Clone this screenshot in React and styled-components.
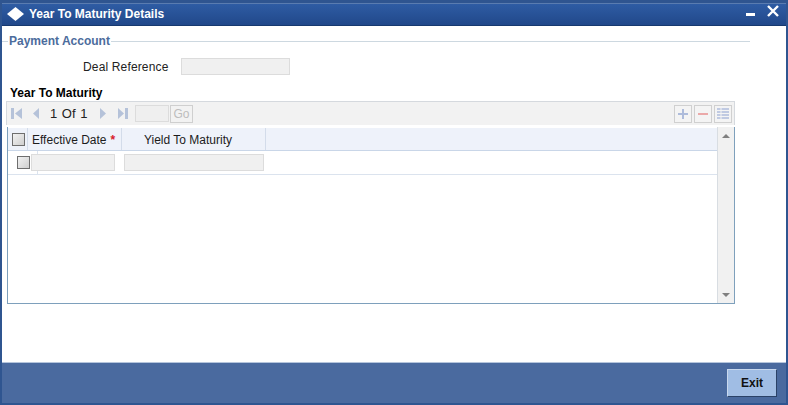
import React from 'react';
import styled, { createGlobalStyle } from 'styled-components';

const GlobalStyle = createGlobalStyle`
  html, body {
    margin: 0;
    padding: 0;
    background: #fff;
    font-family: "Liberation Sans", Arial, sans-serif;
  }
`;

const Window = styled.div`
  width: 788px;
  height: 405px;
  box-sizing: border-box;
  display: flex;
  flex-direction: column;
  border-left: 2px solid #2f5590;
  border-right: 2px solid #2f5590;
  border-bottom: 2px solid #2f5590;
  overflow: hidden;
`;

const TitleBar = styled.div`
  height: 26px;
  flex: none;
  box-sizing: border-box;
  display: flex;
  align-items: center;
  padding: 0 7px 0 5px;
  border-top: 3px solid #2f5590;
  border-bottom: 1px solid #17396f;
  box-shadow: inset 0 1px 0 #5a7cb0;
  background: linear-gradient(#2f5da5, #21488a);
`;

const Title = styled.span`
  margin-left: 5px;
  color: #fff;
  font-size: 12px;
  font-weight: 700;
  flex: 1;
`;

const Body = styled.div`
  flex: 1;
  display: flex;
  flex-direction: column;
  background: #fff;
`;

const Legend = styled.div`
  display: flex;
  align-items: center;
  width: 748px;
  margin-top: 8px;
  height: 14px;
  color: #4c6c9c;
  font-size: 12px;
  font-weight: 700;

  &::before {
    content: '';
    width: 6px;
    height: 1px;
    margin-right: 1px;
    background: #cdd8e0;
  }

  &::after {
    content: '';
    flex: 1;
    height: 1px;
    margin-left: 1px;
    background: #cdd8e0;
  }
`;

const FieldRow = styled.div`
  display: flex;
  align-items: center;
  margin-top: 10px;
  padding-left: 81px;
`;

const FieldLabel = styled.label`
  width: 98px;
  color: #222;
  font-size: 12px;
  letter-spacing: 0.15px;
`;

const TextBox = styled.div`
  box-sizing: border-box;
  width: ${p => p.$w}px;
  height: 17px;
  flex: none;
  margin-left: ${p => p.$gap || 0}px;
  background: #f0f0f0;
  border: 1px solid #dcdcdc;
`;

const SectionTitle = styled.div`
  margin: 11px 0 0 8px;
  height: 15px;
  color: #000;
  font-size: 12px;
  font-weight: 700;
`;

const Toolbar = styled.div`
  box-sizing: border-box;
  width: 729px;
  height: 24px;
  margin-left: 4px;
  padding: 0 0 0 4px;
  display: flex;
  align-items: center;
  background: #f2f2f2;
  border: 1px solid #d5d9de;
  border-bottom: none;
`;

const Pager = styled.div`
  display: flex;
  align-items: center;
  flex: 1;
`;

const PagerIcon = styled.svg`
  width: 13px;
  height: 13px;
  flex: none;
  margin-right: ${p => p.$gap || 0}px;
  fill: #b5c2d9;
`;

const PageText = styled.span`
  width: 47px;
  margin-left: 4px;
  color: #222;
  font-size: 13px;
  word-spacing: 1px;
`;

const GoBox = styled.div`
  box-sizing: border-box;
  width: 34px;
  height: 17px;
  background: #efefef;
  border: 1px solid #dcdcdc;
`;

const GoButton = styled.div`
  box-sizing: border-box;
  width: 23px;
  height: 18px;
  margin-left: 1px;
  border: 1px solid #cfcfcf;
  color: #bdbdbd;
  font-size: 12px;
  line-height: 16px;
  text-align: center;
`;

const ToolButtons = styled.div`
  display: flex;
  gap: 2px;
  padding-right: 2px;
`;

const ToolButton = styled.div`
  box-sizing: border-box;
  width: 18px;
  height: 18px;
  display: flex;
  align-items: center;
  justify-content: center;
  border: 1px solid #d0d0d0;
  background: #f4f4f4;
`;

const Grid = styled.div`
  box-sizing: border-box;
  width: 728px;
  height: 177px;
  margin: 2px 0 0 5px;
  display: flex;
  border: 1px solid #7ea0bc;
  border-top: none;
  background: #fff;
`;

const GridMain = styled.div`
  flex: 1;
  padding-top: 1px;
  border-right: 1px solid #d8dde2;
`;

const HeaderRow = styled.div`
  height: 23px;
  box-sizing: border-box;
  display: flex;
  align-items: center;
  background: #eef2fa;
  border-bottom: 1px solid #c9d6e8;
`;

const HeaderCell = styled.div`
  box-sizing: border-box;
  width: ${p => p.$w}px;
  height: 100%;
  display: flex;
  align-items: center;
  padding: 1px ${p => p.$padRight || 0}px 0 ${p => p.$pad || 0}px;
  justify-content: ${p => (p.$center ? 'center' : 'flex-start')};
  border-right: 1px solid #d3dcea;
  color: #1c1c1c;
  font-size: 12px;
`;

const Required = styled.span`
  margin-left: 4px;
  color: #d8202a;
  font-weight: 700;
`;

const Check = styled.div`
  box-sizing: border-box;
  width: 13px;
  height: 13px;
  flex: none;
  background: linear-gradient(135deg, #f2f2f2, #cfcfcf);
  border: 1px solid #6e6e6e;
`;

const DataRow = styled.div`
  height: 24px;
  box-sizing: border-box;
  display: flex;
  align-items: center;
  border-bottom: 1px solid #dbe3ee;
  background: linear-gradient(#dbe3ee, #dbe3ee) 29px 0 / 1px 100% no-repeat;
`;

const RowCheck = styled.div`
  width: 22px;
  margin-right: 1px;
  display: flex;
  justify-content: flex-end;
  flex: none;
`;

const Scrollbar = styled.div`
  width: 16px;
  flex: none;
  display: flex;
  flex-direction: column;
  justify-content: space-between;
  align-items: center;
  padding: 7px 0 6px;
  background: #f1f1f1;
`;

const Arrow = styled.div`
  width: 0;
  height: 0;
  border-left: 4px solid transparent;
  border-right: 4px solid transparent;
  border-${p => (p.$down ? 'top' : 'bottom')}: 4px solid #808080;
`;

const Spacer = styled.div`
  flex: 1;
`;

const Footer = styled.div`
  height: 41px;
  flex: none;
  box-sizing: border-box;
  display: flex;
  align-items: center;
  justify-content: flex-end;
  padding: 0 9px 0 0;
  background: #4a6a9f;
  border-top: 1px solid #b5c5dc;
`;

const ExitButton = styled.div`
  box-sizing: border-box;
  width: 50px;
  height: 28px;
  display: flex;
  align-items: center;
  justify-content: center;
  background: #a0bde4;
  border-top: 1px solid #c8d8ee;
  border-left: 1px solid #c8d8ee;
  border-right: 1px solid #2a4268;
  border-bottom: 1px solid #2a4268;
  color: #111;
  font-size: 12px;
  font-weight: 700;
`;

const WindowIcons = styled.div`
  display: flex;
  align-items: center;
  gap: 12px;
`;

const CloseIcon = styled.svg`
  margin-bottom: 7px;
`;

const App = () => {
  return (
    <Window>
      <GlobalStyle />
      <TitleBar>
        <svg width="17" height="14" viewBox="0 0 17 14">
          <polygon points="8.5,0 17,7 8.5,14 0,7" fill="#fff" />
        </svg>
        <Title>Year To Maturity Details</Title>
        <WindowIcons>
          <svg width="9" height="3" viewBox="0 0 9 3"><rect width="9" height="3" fill="#fff" /></svg>
          <CloseIcon width="12" height="12" viewBox="0 0 12 12">
            <path d="M1 1L11 11M11 1L1 11" stroke="#fff" strokeWidth="2.4" />
          </CloseIcon>
        </WindowIcons>
      </TitleBar>
      <Body>
        <Legend>Payment Account</Legend>
        <FieldRow>
          <FieldLabel>Deal Reference</FieldLabel>
          <TextBox $w={109} />
        </FieldRow>
        <SectionTitle>Year To Maturity</SectionTitle>
        <Toolbar>
          <Pager>
            <PagerIcon viewBox="0 0 13 13" $gap={6}><path d="M0 1h3v11H0zM11 1v11L4 6.5z" /></PagerIcon>
            <PagerIcon viewBox="0 0 13 13" $gap={3}><path d="M9 1v11L3 6.5z" /></PagerIcon>
            <PageText>1 Of 1</PageText>
            <PagerIcon viewBox="0 0 13 13" $gap={6}><path d="M3 1v11l6-5.500z" /></PagerIcon>
            <PagerIcon viewBox="0 0 13 13" $gap={6}><path d="M2 1v11l6-5.500zM9 1h3v11H9z" /></PagerIcon>
            <GoBox />
            <GoButton>Go</GoButton>
          </Pager>
          <ToolButtons>
            <ToolButton>
              <svg width="12" height="12" viewBox="0 0 12 12"><path d="M5 1h2v4h4v2H7v4H5V7H1V5h4z" fill="#aebcdb" /></svg>
            </ToolButton>
            <ToolButton>
              <svg width="12" height="12" viewBox="0 0 12 12"><rect x="1" y="5" width="10" height="2" fill="#eba9a9" /></svg>
            </ToolButton>
            <ToolButton>
              <svg width="14" height="12" viewBox="0 0 14 12">
                <path d="M1 1h12M1 4h12M1 7h12M1 10h12" stroke="#aebcdb" strokeWidth="1.500" />
                <path d="M5 0v12" stroke="#f4f4f4" />
              </svg>
            </ToolButton>
          </ToolButtons>
        </Toolbar>
        <Grid>
          <GridMain>
            <HeaderRow>
              <HeaderCell $w={20} $pad={4}><Check /></HeaderCell>
              <HeaderCell $w={94} $pad={4}>Effective Date<Required>*</Required></HeaderCell>
              <HeaderCell $w={144} $center $padRight={11}>Yield To Maturity</HeaderCell>
            </HeaderRow>
            <DataRow>
              <RowCheck><Check /></RowCheck>
              <TextBox $w={84} />
              <TextBox $w={140} $gap={9} />
            </DataRow>
          </GridMain>
          <Scrollbar>
            <Arrow />
            <Arrow $down />
          </Scrollbar>
        </Grid>
        <Spacer />
        <Footer>
          <ExitButton>Exit</ExitButton>
        </Footer>
      </Body>
    </Window>
  );
};

export default App;
